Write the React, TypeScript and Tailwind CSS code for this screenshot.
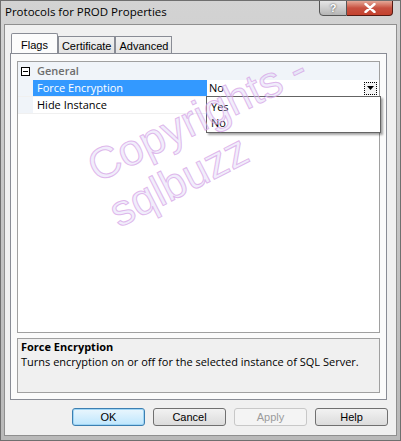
import React from "react";

const ui = { fontFamily: '"Open Sans", "Noto Sans", sans-serif' };
const ms = { fontFamily: '"Liberation Sans", Arial, sans-serif' };

function Watermark() {
  return (
    <svg
      className="absolute left-0 top-0 pointer-events-none"
      width={401}
      height={441}
      style={{ fontFamily: '"Liberation Sans", Arial, sans-serif' }}
    >
      <g fill="#d8ccf6" fillOpacity={0.35} stroke="#d6a4e6" strokeOpacity={0.75} strokeWidth={1} fontSize={44}>
        <text x={96} y={182} transform="rotate(-26 96 182)">Copyrights -</text>
        <text x={118} y={227} transform="rotate(-27 118 227)">sqlbuzz</text>
      </g>
    </svg>
  );
}

function Tab({ label, active }: { label: string; active?: boolean }) {
  return active ? (
    <div
      className="relative z-10 -mb-px h-[20px] px-[9px] pt-[3px] border border-b-0 border-[#898c95] bg-[#fcfcfc] text-[11px] text-black rounded-t-[2px]"
      style={ms}
    >
      {label}
    </div>
  ) : (
    <div
      className="h-[17px] mt-[3px] px-[3px] pt-[1px] border border-b-0 border-[#898c95] bg-gradient-to-b from-[#f2f2f2] to-[#e3e3e3] text-[11px] text-black"
      style={ms}
    >
      {label}
    </div>
  );
}

function Row({
  name,
  value,
  selected,
  dropdown,
}: {
  name: string;
  value?: string;
  selected?: boolean;
  dropdown?: boolean;
}) {
  return (
    <div className="flex h-[17px] border-b border-[#f0f0f0]">
      <div className="w-[15px] bg-[#f0f4f9]" />
      <div
        className={
          selected
            ? "w-[174px] pl-[4px] leading-[16px] bg-[#3399ff] text-white text-[11px]"
            : "w-[174px] pl-[4px] leading-[16px] text-black text-[11px] border-r border-[#f0f0f0]"
        }
        style={ui}
      >
        {name}
      </div>
      <div className="flex-1 flex items-center pl-[2px] pr-[2px] text-[11px] text-black" style={ui}>
        <span className="flex-1 leading-[16px]">{value}</span>
        {dropdown && (
          <div className="w-[13px] h-[13px] border border-dotted border-black bg-[#f4f4f4] flex items-center justify-center">
            <svg width="7" height="4" viewBox="0 0 7 4">
              <path d="M0 0h7L3.5 4z" fill="#000" />
            </svg>
          </div>
        )}
      </div>
    </div>
  );
}

function Button({ label, primary, disabled }: { label: string; primary?: boolean; disabled?: boolean }) {
  const cls = primary
    ? "border-[#3c7fb1] bg-gradient-to-b from-[#eaf6fd] to-[#bee6fd] shadow-[inset_0_0_0_1px_#9fd5f5]"
    : disabled
    ? "border-[#c8c8c8] bg-[#f4f4f4] text-[#9b9b9b]"
    : "border-[#707070] bg-gradient-to-b from-[#f2f2f2] to-[#dcdcdc]";
  return (
    <div
      className={`w-[73px] h-[18px] rounded-[3px] border flex items-center justify-center text-[11px] ${cls} ${disabled ? "" : "text-black"}`}
      style={ms}
    >
      {label}
    </div>
  );
}

export default function App() {
  return (
    <div className="relative w-[401px] h-[441px] overflow-hidden bg-gradient-to-b from-[#d3d3d3] via-[#c4c4c4] to-[#b9b9b9] flex flex-col border border-[#6f6f6f]">
      {/* Title bar */}
      <div className="h-[23px] flex items-start">
        <div className="flex-1 pl-[4px] pt-[2px] text-[11.5px] text-black" style={ui}>
          Protocols for PROD Properties
        </div>
        <div className="flex mr-[7px] -mt-px">
          <div className="w-[28px] h-[16px] rounded-bl-[4px] border border-[#555] bg-gradient-to-b from-[#e6e6e6] to-[#b5b5b5] flex items-center justify-center text-[11px] font-bold text-white [text-shadow:0_0_2px_#333]" style={ms}>
            ?
          </div>
          <div className="w-[46px] h-[16px] rounded-br-[4px] border border-l-0 border-[#551a12] bg-gradient-to-b from-[#e4a898] via-[#c75040] to-[#c4422e] flex items-center justify-center">
            <svg width="12" height="10" viewBox="0 0 12 10">
              <path d="M1.5 1l9 8M10.5 1l-9 8" stroke="#fff" strokeWidth="2.4" strokeLinecap="round" />
            </svg>
          </div>
        </div>
      </div>

      {/* Client area */}
      <div className="mx-[3px] mb-[4px] flex-1 bg-[#f0f0f0] border border-[#8f8f8f] flex flex-col pl-[5px]">
        {/* Tabs */}
        <div className="flex mt-[8px] pl-[1px]">
          <Tab label="Flags" active />
          <Tab label="Certificate" />
          <Tab label="Advanced" />
        </div>

        {/* Tab panel */}
        <div className="w-[377px] border border-[#898c95] bg-[#fbfbfb] pt-[7px] pl-[6px] pb-[6px] flex flex-col">
          {/* Property grid */}
          <div className="w-[363px] h-[272px] border border-[#a0a0a0] bg-white flex flex-col">
            <div className="flex h-[18px] bg-[#f0f4f9] items-center">
              <div className="w-[15px] flex justify-center">
                <div className="w-[9px] h-[9px] border border-black bg-white flex items-center justify-center">
                  <div className="w-[5px] h-px bg-black" />
                </div>
              </div>
              <div className="pl-[4px] text-[11px] font-semibold text-[#6d6d6d]" style={ui}>
                General
              </div>
            </div>
            <Row name="Force Encryption" value="No" selected dropdown />
            <Row name="Hide Instance" />
          </div>

          {/* Description */}
          <div className="w-[363px] h-[55px] mt-[5px] border border-[#a0a0a0] bg-[#f0f0f0] pl-[3px]" style={ui}>
            <div className="text-[11px] font-bold text-black leading-[15px]">Force Encryption</div>
            <div className="text-[11px] text-black leading-[15px]">
              Turns encryption on or off for the selected instance of SQL Server.
            </div>
          </div>
        </div>

        {/* Buttons */}
        <div className="flex gap-[8px] mt-[8px] pl-[62px]">
          <Button label="OK" primary />
          <Button label="Cancel" />
          <Button label="Apply" disabled />
          <Button label="Help" />
        </div>
      </div>

      {/* Dropdown list */}
      <div className="absolute left-[205px] top-[95px] w-[175px] h-[37px] bg-white border border-[#646464] shadow-[2px_2px_2px_rgba(0,0,0,0.35)] pl-[4px] pt-[2px]" style={ui}>
        <div className="text-[11px] leading-[16px] text-black">Yes</div>
        <div className="text-[11px] leading-[16px] text-black">No</div>
      </div>

      <Watermark />
    </div>
  );
}
